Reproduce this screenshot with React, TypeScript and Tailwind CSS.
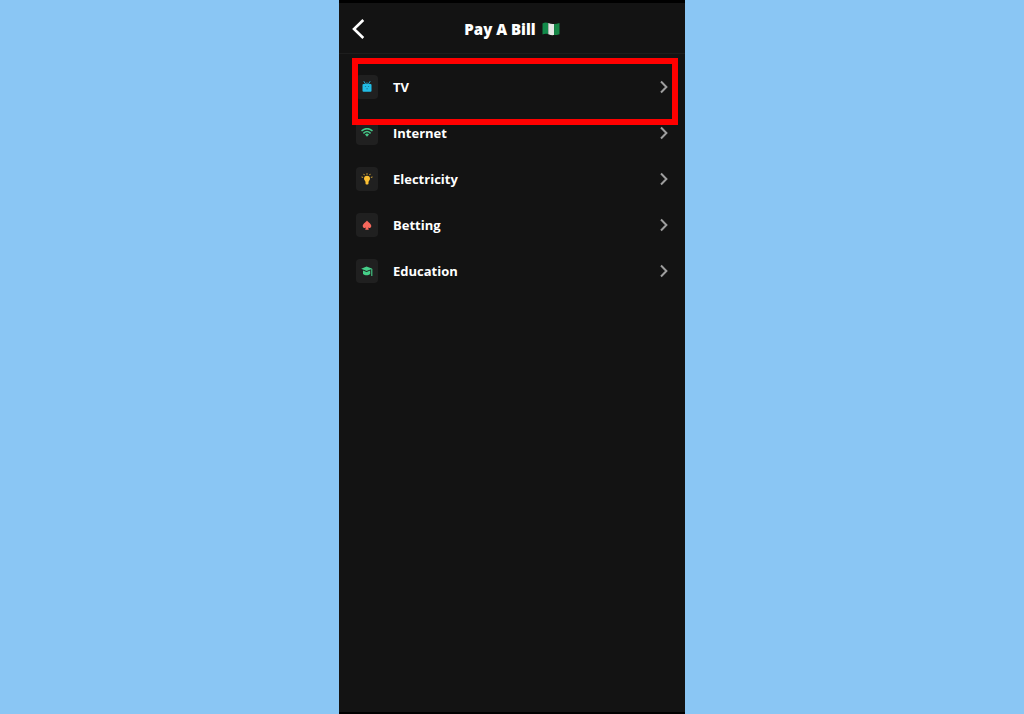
import React from 'react';

interface Bill {
    id: string;
    label: string;
    icon: React.ReactNode;
    highlighted?: boolean;
}

const TvIcon = () => (
    <svg viewBox="0 0 10 12" className="w-[10px] h-3" aria-hidden="true">
        <path d="M1.8 .2 3.8 3.4M8.2 .2 6.2 3.4M5 1.4v2" stroke="#22a8d0" strokeWidth="1" fill="none" />
        <rect x="0.5" y="3" width="9" height="7.8" rx="1" fill="#22bde6" />
        <path d="M2.9 5.5h1.2M5.9 5.5h1.2M4.3 7.8h1.6" stroke="#1a7f9c" strokeWidth="1" />
    </svg>
);

const WifiIcon = () => (
    <svg viewBox="0 0 12 10" className="w-3 h-[10px]" aria-hidden="true">
        <g fill="none" stroke="#45c988" strokeWidth="1.5" strokeLinecap="round">
            <path d="M1 2.6a7.4 7.4 0 0 1 10 0" />
            <path d="M2.9 4.9a4.6 4.6 0 0 1 6.2 0" />
        </g>
        <path d="M4 6.6a2.8 2.8 0 0 1 4 0L6 8.7z" fill="#45c988" />
    </svg>
);

const BulbIcon = () => (
    <svg viewBox="0 0 12 12" className="w-3 h-3" aria-hidden="true">
        <path d="M6 2.7a3 3 0 0 1 3 3c0 1.500-1.500 2.100-1.500 3.500v1.300a1 1 0 0 1-1 1h-1a1 1 0 0 1-1-1V9.200C4.500 7.800 3 7.200 3 5.700a3 3 0 0 1 3-3z" fill="#fcc033" />
        <path d="M6 .2v1.600M2.700 .9l.8 1.300M9.300 .9l-.8 1.300M.5 4l1.600.4M11.500 4l-1.600.4" stroke="#d9a632" strokeWidth="1" />
    </svg>
);

const SpadeIcon = () => (
    <svg viewBox="0 0 10 11" className="w-[10px] h-[11px]" aria-hidden="true">
        <path d="M5 .5C6.200 2.200 9.300 3.700 9.300 6c0 1.900-2.100 2.600-3.200 1.600l.7 2.100H3.200l.7-2.100C2.800 8.600.7 7.900.7 6 .7 3.700 3.800 2.200 5 .5z" fill="#f8685c" />
    </svg>
);

const GraduationIcon = () => (
    <svg viewBox="0 0 12 11" className="w-3 h-[11px]" aria-hidden="true">
        <path d="M5.600.6 11.400 2.800 5.600 5 .2 2.800z" fill="#45cf88" />
        <path d="M2 4.600v3.400c1.800 1.700 5.400 1.700 7.200 0V4.600L5.600 6z" fill="#45cf88" />
        <path d="M10.800 3v7" stroke="#45cf88" strokeWidth="1.1" />
    </svg>
);

const NigeriaFlag = () => (
    <svg viewBox="0 0 18 14" className="w-[18px] h-[14px]" role="img" aria-label="Nigeria">
        <path d="M.5 1.400C2.500.2 4.500.2 6.300 1v11.200c-1.800-.7-3.800-.6-5.800.4z" fill="#128a4a" />
        <path d="M6.300 1c2 .7 3.800 1.300 5.800.9v11.200c-2 .4-3.800-.2-5.800-.9z" fill="#e4e8e5" />
        <path d="M12.100 1.900c1.900 0 3.600-.5 5.400-1v11.300c-1.800.6-3.500.9-5.400.9z" fill="#168746" />
    </svg>
);

const bills: Bill[] = [
    { id: 'tv', label: 'TV', icon: <TvIcon />, highlighted: true },
    { id: 'internet', label: 'Internet', icon: <WifiIcon /> },
    { id: 'electricity', label: 'Electricity', icon: <BulbIcon /> },
    { id: 'betting', label: 'Betting', icon: <SpadeIcon /> },
    { id: 'education', label: 'Education', icon: <GraduationIcon /> },
];

const BillRow = ({ bill }: { bill: Bill }) => (
    <li className="relative">
        <button type="button" className="flex w-full items-center h-[46px] px-[17px] text-left">
            <span className="flex w-[22px] h-6 items-center justify-center rounded bg-[#202020]">
                {bill.icon}
            </span>
            <span className="flex-1 ml-[15px] pt-0.5 text-[13px] font-bold text-white">{bill.label}</span>
            <svg viewBox="0 0 8 14" className="w-2 h-[14px]" aria-hidden="true">
                <path d="M1 1.500 6.400 7 1 12.500" fill="none" stroke="#9e9e9e" strokeWidth="2" />
            </svg>
        </button>
        {/* Frame that points out the row to tap */}
        {bill.highlighted && (
            <span className="pointer-events-none absolute z-10 -top-1.5 -bottom-[15px] left-[13px] right-[7px] border-6 border-[#ff0000]" />
        )}
    </li>
);

export default function App() {
    return (
        <div className="flex min-h-screen justify-center bg-[#8ac6f4] font-['Open_Sans',sans-serif]">
            <main className="w-full max-w-[346px] border-t-3 border-b-2 border-black bg-[#131313]">
                <header className="grid grid-cols-[1fr_auto_1fr] h-[51px] items-center border-b border-[#1d1d1d] px-3 pt-0.5">
                    <button type="button" aria-label="Back" className="justify-self-start">
                        <svg viewBox="0 0 14 20" className="w-[14px] h-5" aria-hidden="true">
                            <path d="M12.300 1 3 10l9.300 9" fill="none" stroke="#ffffff" strokeWidth="2.6" />
                        </svg>
                    </button>
                    <h1 className="flex items-center gap-1.5 text-[15px] font-extrabold text-white">
                        Pay A Bill
                        <NigeriaFlag />
                    </h1>
                </header>
                <ul className="pt-[10px]">
                    {bills.map(bill => (
                        <BillRow key={bill.id} bill={bill} />
                    ))}
                </ul>
            </main>
        </div>
    );
}
